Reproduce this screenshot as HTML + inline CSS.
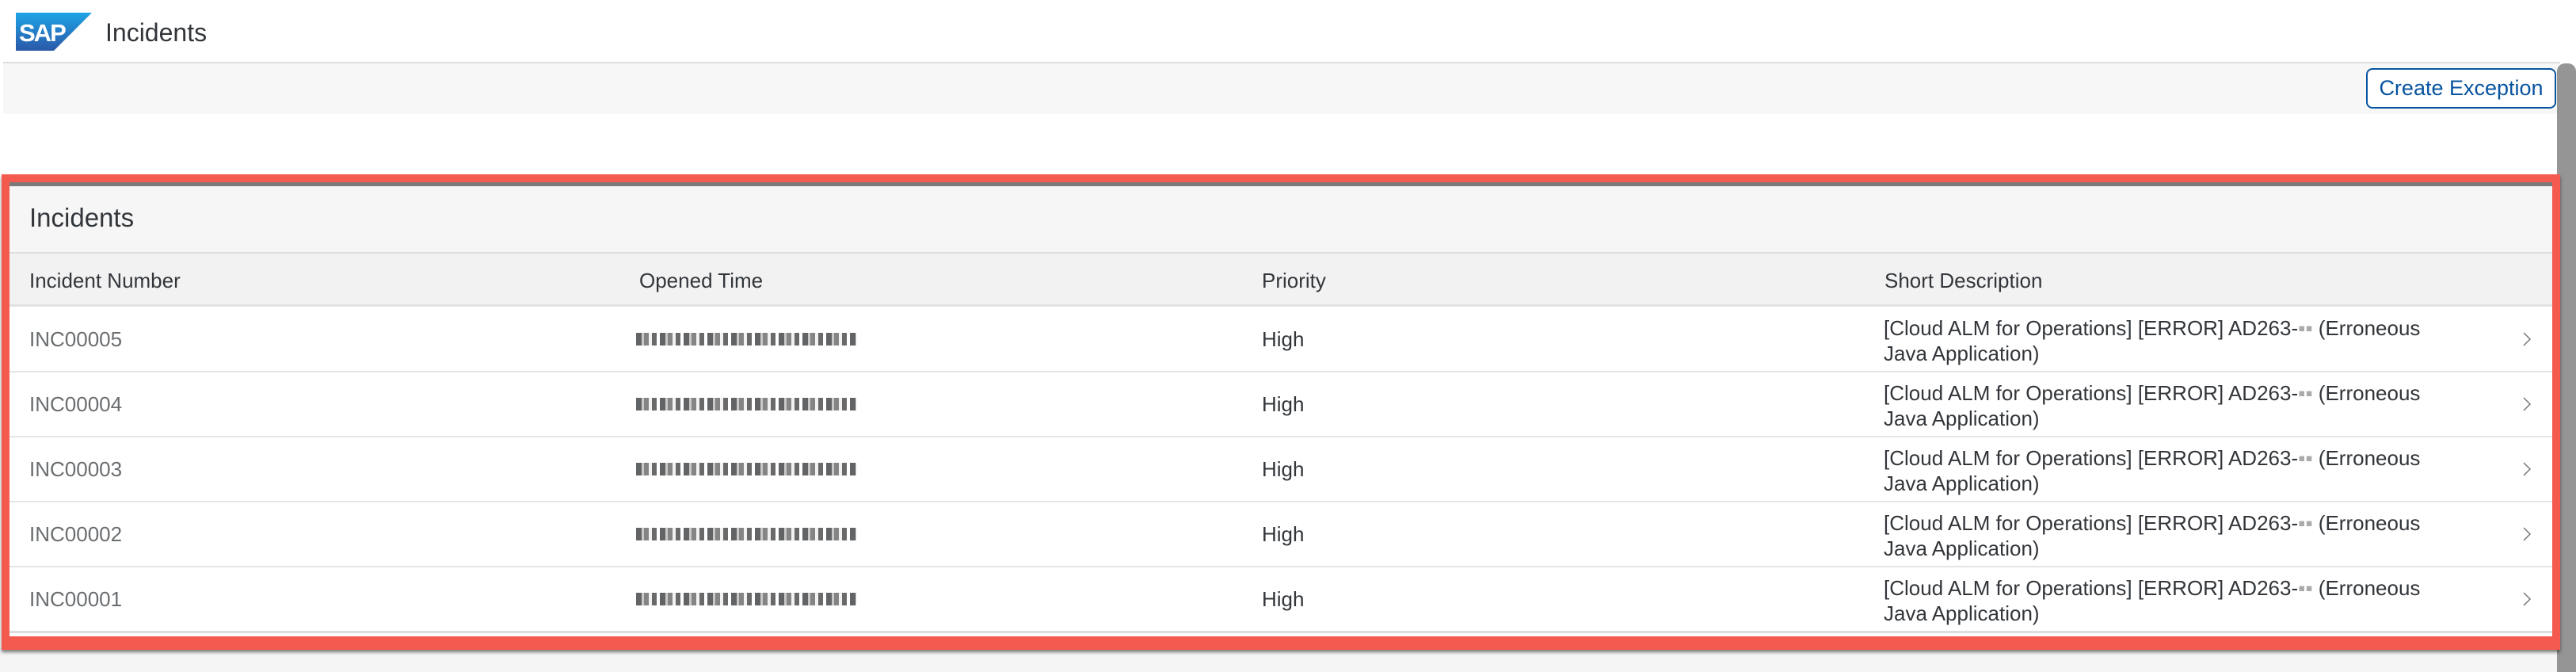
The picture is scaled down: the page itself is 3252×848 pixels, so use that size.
<!DOCTYPE html>
<html><head><meta charset="utf-8"><style>
*{margin:0;padding:0;box-sizing:border-box}
body{width:3252px;height:848px;position:relative;overflow:hidden;background:#fff;font-family:"Liberation Sans",sans-serif;color:#32363a}
.a{position:absolute}
.t{position:absolute;white-space:nowrap;font-size:26px;line-height:32px}
.blur{position:absolute;height:16px;width:278px;background:repeating-linear-gradient(90deg,#3a3d40 0 7px,#bbb 7px 10px,#666 10px 16px,#eee 16px 20px,#444 20px 26px,#fff 26px 30px);opacity:.8}
.chev{position:absolute;left:3184px;width:12px;height:20px}
</style></head><body>
<svg class="a" style="left:20px;top:16px" width="96" height="48" viewBox="0 0 96 48">
<defs><linearGradient id="g" x1="0" y1="0" x2="0" y2="1"><stop offset="0" stop-color="#1ea4e6"/><stop offset="1" stop-color="#2a58a8"/></linearGradient></defs>
<polygon points="0,0 96,0 48,48 0,48" fill="url(#g)"/>
<text x="4" y="36" font-family="Liberation Sans" font-weight="bold" font-size="31" fill="#fff" letter-spacing="-2">SAP</text>
</svg>
<div class="t" style="left:133px;top:22px;font-size:32px;line-height:38px">Incidents</div>
<div class="a" style="left:4px;top:78px;width:3228px;height:2px;background:#ddd"></div>
<div class="a" style="left:4px;top:80px;width:3228px;height:64px;background:#f7f7f7"></div>
<div class="a" style="left:2987px;top:86px;width:240px;height:51px;border:2px solid #0854a0;border-radius:8px;background:#fff;color:#0854a0;font-size:27px;line-height:46px;text-align:center">Create Exception</div>
<div class="a" style="left:3228px;top:80px;width:24px;height:768px;background:#959595;border-radius:10px 10px 0 0"></div>
<div class="a" style="left:0;top:818px;width:3228px;height:30px;background:#f5f5f5"></div>
<div class="a" style="left:2px;top:220px;width:3230px;height:600px;background:#f55a4e;box-shadow:0 3px 4px rgba(0,0,0,.5)"></div>
<div class="a" style="left:12px;top:230px;width:3210px;height:573px;background:#fff;overflow:hidden">
 <div class="a" style="left:0;top:0;width:3210px;height:88px;background:#f6f6f6;border-top:5px solid #7a7a7a"></div>
 <div class="t" style="left:25px;top:25px;font-size:33px;line-height:40px">Incidents</div>
 <div class="a" style="left:0;top:88px;width:3210px;height:2px;background:#ddd"></div>
 <div class="a" style="left:0;top:90px;width:3210px;height:64px;background:#f2f2f2"></div>
 <div class="a" style="left:0;top:154px;width:3210px;height:3px;background:#e2e2e2"></div>
 <div class="t" style="left:25px;top:108px">Incident Number</div>
 <div class="t" style="left:795px;top:108px">Opened Time</div>
 <div class="t" style="left:1581px;top:108px">Priority</div>
 <div class="t" style="left:2367px;top:108px">Short Description</div>
</div>
<div class="t" style="left:37px;top:412px;color:#6a6d70">INC00005</div><div class="blur" style="left:803px;top:420px"></div><div class="t" style="left:1593px;top:412px">High</div>
<div class="t" style="left:2378px;top:398px">[Cloud ALM for Operations] [ERROR] AD263-<span style="color:#aaa">▪▪</span> (Erroneous<br>Java Application)</div>
<svg class="chev" style="top:418px" viewBox="0 0 12 20"><path d="M2 2 L10 10 L2 18" fill="none" stroke="#777" stroke-width="1.5"/></svg>
<div class="a" style="left:12px;top:468px;width:3210px;height:2px;background:#e5e5e5"></div>
<div class="t" style="left:37px;top:494px;color:#6a6d70">INC00004</div><div class="blur" style="left:803px;top:502px"></div><div class="t" style="left:1593px;top:494px">High</div>
<div class="t" style="left:2378px;top:480px">[Cloud ALM for Operations] [ERROR] AD263-<span style="color:#aaa">▪▪</span> (Erroneous<br>Java Application)</div>
<svg class="chev" style="top:500px" viewBox="0 0 12 20"><path d="M2 2 L10 10 L2 18" fill="none" stroke="#777" stroke-width="1.5"/></svg>
<div class="a" style="left:12px;top:550px;width:3210px;height:2px;background:#e5e5e5"></div>
<div class="t" style="left:37px;top:576px;color:#6a6d70">INC00003</div><div class="blur" style="left:803px;top:584px"></div><div class="t" style="left:1593px;top:576px">High</div>
<div class="t" style="left:2378px;top:562px">[Cloud ALM for Operations] [ERROR] AD263-<span style="color:#aaa">▪▪</span> (Erroneous<br>Java Application)</div>
<svg class="chev" style="top:582px" viewBox="0 0 12 20"><path d="M2 2 L10 10 L2 18" fill="none" stroke="#777" stroke-width="1.5"/></svg>
<div class="a" style="left:12px;top:632px;width:3210px;height:2px;background:#e5e5e5"></div>
<div class="t" style="left:37px;top:658px;color:#6a6d70">INC00002</div><div class="blur" style="left:803px;top:666px"></div><div class="t" style="left:1593px;top:658px">High</div>
<div class="t" style="left:2378px;top:644px">[Cloud ALM for Operations] [ERROR] AD263-<span style="color:#aaa">▪▪</span> (Erroneous<br>Java Application)</div>
<svg class="chev" style="top:664px" viewBox="0 0 12 20"><path d="M2 2 L10 10 L2 18" fill="none" stroke="#777" stroke-width="1.5"/></svg>
<div class="a" style="left:12px;top:714px;width:3210px;height:2px;background:#e5e5e5"></div>
<div class="t" style="left:37px;top:740px;color:#6a6d70">INC00001</div><div class="blur" style="left:803px;top:748px"></div><div class="t" style="left:1593px;top:740px">High</div>
<div class="t" style="left:2378px;top:726px">[Cloud ALM for Operations] [ERROR] AD263-<span style="color:#aaa">▪▪</span> (Erroneous<br>Java Application)</div>
<svg class="chev" style="top:746px" viewBox="0 0 12 20"><path d="M2 2 L10 10 L2 18" fill="none" stroke="#777" stroke-width="1.5"/></svg>
<div class="a" style="left:12px;top:796px;width:3210px;height:3px;background:#ddd"></div>
</body></html>
